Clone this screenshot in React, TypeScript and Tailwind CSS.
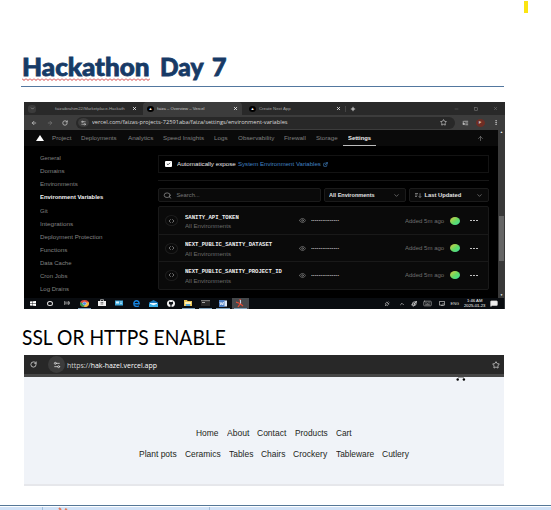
import { useLayoutEffect, useRef, type ReactNode } from "react";
import { Search, ChevronDown, Eye, Code, Star, ArrowUp, ArrowLeft, ArrowRight, RotateCw, ExternalLink, X, Plus, Check, ListMusic, Keyboard, MessageSquare, Settings2, MoreVertical, ChevronUp, Minus, Square, Plug, PenTool } from "lucide-react";

/* Single line label stretched to the width of its box. */
function Fit({ className, children }: { className: string; children: ReactNode }) {
  const box = useRef<HTMLSpanElement>(null);
  const text = useRef<HTMLSpanElement>(null);
  useLayoutEffect(() => {
    if (!box.current || !text.current) return;
    text.current.style.transform = `scaleX(${box.current.getBoundingClientRect().width / text.current.offsetWidth})`;
  }, []);
  return (
    <span ref={box} className={`block shrink-0 whitespace-nowrap ${className}`}>
      <span ref={text} className="inline-block origin-left">{children}</span>
    </span>
  );
}

const nav = [
  ["Project", "w-[19px] mr-[10.5px]"],
  ["Deployments", "w-[36px] mr-[10.5px]"],
  ["Analytics", "w-[25px] mr-[10px]"],
  ["Speed Insights", "w-[41px] mr-[10.5px]"],
  ["Logs", "w-[13.5px] mr-[10px]"],
  ["Observability", "w-[36px] mr-[10.5px]"],
  ["Firewall", "w-[21.5px] mr-[10px]"],
  ["Storage", "w-[22px] mr-[8px]"],
];

const side = [
  ["General", "w-[21px]"],
  ["Domains", "w-[24.5px]"],
  ["Environments", "w-[37.5px]"],
  ["Environment Variables", "w-[63px] font-bold text-[#f2f2f2]"],
  ["Git", "w-[7.5px]"],
  ["Integrations", "w-[33px]"],
  ["Deployment Protection", "w-[63px]"],
  ["Functions", "w-[27px]"],
  ["Data Cache", "w-[32px]"],
  ["Cron Jobs", "w-[28px]"],
  ["Log Drains", "w-[29px]"],
];

const variables = [
  ["SANITY_API_TOKEN", "w-[54px]"],
  ["NEXT_PUBLIC_SANITY_DATASET", "w-[87px]"],
  ["NEXT_PUBLIC_SANITY_PROJECT_ID", "w-[97px]"],
];

function TaskCell({ open, active, children }: { open?: boolean; active?: boolean; children: ReactNode }) {
  return (
    <div className={`flex h-full w-[17.3px] shrink-0 items-center justify-center px-[2px] ${active ? "bg-[#45484b]" : ""}`}>
      <div className={`flex h-full w-full items-center justify-center border-b ${open ? "border-[#7d9fb8]" : "border-transparent"}`}>{children}</div>
    </div>
  );
}

function Taskbar() {
  return (
    <div className="flex h-[11px] items-center bg-[#090c10] text-[#dedede]">
      <TaskCell>
        <svg className="h-[5px] w-[6px]" viewBox="0 0 6 5" fill="#fff"><path d="M0 .6 2.6.3v2H0zM3 .2 6 0v2.3H3zM0 2.7h2.6v2L0 4.4zM3 2.7h3V5l-3-.2z" /></svg>
      </TaskCell>
      <TaskCell><span className="h-[5px] w-[5.5px] rounded-[50%] border border-[#ddd]" /></TaskCell>
      <TaskCell>
        <svg className="h-[4px] w-[6px]" viewBox="0 0 7 5" fill="none" stroke="#bbb" strokeWidth=".8"><path d="M.5 0v5M5.5 0v5M.5 1.5h5M.5 3.5h5M6.7 1v3" /></svg>
      </TaskCell>
      <TaskCell open>
        <svg className="h-[7px] w-[9px]" viewBox="0 0 9 7" preserveAspectRatio="none"><ellipse cx="4.5" cy="3.5" rx="4.5" ry="3.5" fill="#d9473a" /><path d="M.3 2.2A4.5 3.5 0 0 0 4 7l1.5-3z" fill="#2f9e50" /><path d="M8.7 2.3A4.5 3.5 0 0 1 4 7l2-4.6z" fill="#eebb3b" /><ellipse cx="4.5" cy="3.5" rx="1.9" ry="1.5" fill="#4384e8" stroke="#eee" strokeWidth=".5" /></svg>
      </TaskCell>
      <TaskCell>
        <svg className="h-[8px] w-[8px]" viewBox="0 0 8 8"><path d="M2.5 2V.7h3V2" fill="none" stroke="#ddd" strokeWidth=".7" /><path d="M0 2h8v5H0z" fill="#eee" /><path d="M2.7 3h1v1h-1zM4.2 3h1v1h-1zM2.7 4.6h1v1h-1zM4.2 4.6h1v1h-1z" fill="#555" /></svg>
      </TaskCell>
      <TaskCell>
        <svg className="h-[6px] w-[8px]" viewBox="0 0 8 6"><path d="M0 .5h8v5H0z" fill="#3fa8dc" /><path d="M1 1.5h3v2H1z" fill="#d8f2ff" /><path d="M5 2h2M5 3.5h2" stroke="#d8f2ff" strokeWidth=".6" /></svg>
      </TaskCell>
      <TaskCell>
        <svg className="h-[7px] w-[7px]" viewBox="0 0 7 7" fill="none" stroke="#1682dc" strokeWidth="1.4"><path d="M1.6 3.7h4.6C6 1.2 4.6.7 3.6.7 2 .7.8 2 .8 3.7.8 6.5 4 6.9 6 5.8" /></svg>
      </TaskCell>
      <TaskCell>
        <svg className="h-[7px] w-[9px]" viewBox="0 0 9 7"><path d="M0 2.5 4.5 0 9 2.5V7H0z" fill="#1876b8" /><path d="M1 3h7v1.2L4.5 6 1 4.2z" fill="#e8f6ff" /><path d="M0 3.5 4.5 5.2 9 3.5V7H0z" fill="#38b0e8" /></svg>
      </TaskCell>
      <TaskCell>
        <svg className="h-[7px] w-[8px]" viewBox="0 0 8 7"><ellipse cx="4" cy="3.5" rx="4" ry="3.5" fill="#f4f4f4" /><path d="M2.2 1.5 3.2 2h1.6l1-.5.3 1.5c0 1.2-.7 1.6-1.5 1.7V7H3.400V4.7C2.5 4.6 1.9 4.2 1.9 3z" fill="#11151a" /></svg>
      </TaskCell>
      <TaskCell open>
        <svg className="h-[6px] w-[8px]" viewBox="0 0 8 6"><path d="M0 0h3l.6 1H8v5H0z" fill="#e9c75c" /><path d="M1 2h6v2H1z" fill="#fff1b8" /><path d="M2 4h4v2H2z" fill="#58a9d6" /></svg>
      </TaskCell>
      <TaskCell open>
        <svg className="h-[6px] w-[9px]" viewBox="0 0 9 6"><path d="M0 0h9v6H0z" fill="#292929" /><path d="M0 0h9v1.2H0z" fill="#777" /><path d="M1 2.5h3" stroke="#ddd" strokeWidth=".7" /></svg>
      </TaskCell>
      <TaskCell open>
        <svg className="h-[7px] w-[8px]" viewBox="0 0 8 7"><path d="M3 .5h5v6H3z" fill="#dce7f6" /><path d="M0 0h5.5v7H0z" fill="#4d7fc4" /><path d="m1 2 .8 3 1-2.5 1 2.5.8-3" fill="none" stroke="#fff" strokeWidth=".7" /></svg>
      </TaskCell>
      <TaskCell open active>
        <svg className="h-[8px] w-[8px]" viewBox="0 0 8 8"><path d="m4 0 .7 4L2 8M0 3l4 1.5L7 7" fill="none" stroke="#df4a35" strokeWidth="1.3" /><path d="M4.5 1v3.5" stroke="#bfd3e2" strokeWidth="1" /></svg>
      </TaskCell>
      <div className="ml-auto flex h-full items-center">
        <Plug className="mr-[8.5px] h-[6px] w-[6px] rotate-45 text-[#aaa]" strokeWidth={3} />
        <ChevronUp className="mr-[6.5px] h-[6px] w-[6px]" strokeWidth={2.5} />
        <PenTool className="mr-[6px] h-[6px] w-[6px] rotate-90" strokeWidth={3} />
        <Keyboard className="mr-[6.5px] h-[7px] w-[9px] text-[#aaa]" strokeWidth={2} preserveAspectRatio="none" />
        <svg className="mr-[6px] h-[5px] w-[6px]" viewBox="0 0 6 5" fill="none" stroke="#bbb" strokeWidth=".8"><path d="M.4.4h5.2v3.7H.4zM2 4.6h2.5M3.5 2.8h1.2" /></svg>
        <Fit className="mr-[4.5px] w-[9px] text-[4px] leading-[6px]">ENG</Fit>
        <div className="mr-[5px] flex flex-col items-center text-[4.2px] leading-[4.8px] text-white">
          <Fit className="w-[15px]">1:46 AM</Fit>
          <Fit className="w-[21px]">2025-01-23</Fit>
        </div>
        <MessageSquare className="mr-[6px] h-[7px] w-[8px]" fill="#eee" preserveAspectRatio="none" />
        <span className="h-full w-px bg-[#33363a]" />
      </div>
    </div>
  );
}

function ChromeTop() {
  return (
    <>
      <div className="flex h-[13px] items-center bg-[#292929] pl-[4px] text-[4.3px] leading-[6px] text-[#a4a4a4]">
        <span className="mr-[19px] flex h-[8px] w-[8px] items-center justify-center rounded-[3px] bg-[#3b3b3b]"><ChevronDown className="h-[5px] w-[5px]" strokeWidth={3} /></span>
        <Fit className="w-[70px]">faizaibrahim22/Marketplace-Hackath</Fit>
        <X className="ml-[7px] h-[5px] w-[5px] text-white" strokeWidth={3.5} />
        <div className="ml-[6px] flex h-[13px] w-[99px] items-center rounded-t-[4px] bg-[#3c3c3c] pl-[4px]">
          <span className="mr-[3px] flex h-[6px] w-[7px] items-center justify-center rounded-[50%] bg-black text-[4px] leading-none text-white">▲</span>
          <Fit className="w-[47px] text-[#c8c8c8]">faiza – Overview – Vercel</Fit>
          <X className="ml-[29px] h-[5px] w-[5px] text-white" strokeWidth={3.5} />
        </div>
        <span className="mr-[3px] ml-[7px] flex h-[6px] w-[7px] items-center justify-center rounded-[50%] bg-black text-[4px] leading-none text-white">▲</span>
        <Fit className="w-[32px]">Create Next App</Fit>
        <X className="ml-[45px] h-[5px] w-[5px] text-white" strokeWidth={3.5} />
        <span className="mx-[4px] h-[6px] w-px bg-[#444]" />
        <Plus className="h-[6px] w-[6px] text-white" strokeWidth={3} />
        <Minus className="ml-auto h-[6px] w-[5px] text-[#777]" />
        <Square className="mx-[15px] h-[4px] w-[4px] text-[#888]" strokeWidth={3} />
        <X className="mr-[7px] h-[5px] w-[5px] text-[#888]" />
      </div>
      <div className="flex h-[15px] items-center bg-[#3c3c3c] pl-[6.5px] text-[#c9c9c9]">
        <ArrowLeft className="h-[6px] w-[6px]" strokeWidth={3} />
        <ArrowRight className="ml-[10px] h-[6px] w-[6px] text-[#777]" strokeWidth={3} />
        <RotateCw className="ml-[9px] h-[6px] w-[6px]" strokeWidth={3} />
        <div className="ml-[8px] flex h-[12px] w-[379px] items-center rounded-full bg-[#282828] pl-[2px]">
          <span className="flex h-[9px] w-[11px] items-center justify-center rounded-[50%] bg-[#3c3c3c]"><Settings2 className="h-[6px] w-[7px]" strokeWidth={2.5} /></span>
          <Fit className="ml-[3px] w-[196px] font-['Open_Sans'] text-[6px] leading-[9px] text-[#d8d8d8]">vercel.com/faizas-projects-72591aba/faiza/settings/environment-variables</Fit>
          <Star className="ml-auto mr-[8px] h-[7px] w-[7px]" strokeWidth={2.5} />
        </div>
        <ListMusic className="ml-[7px] h-[6px] w-[7px] -scale-x-100" strokeWidth={3} />
        <span className="ml-[7px] flex h-[8px] w-[9px] items-center justify-center rounded-[50%] bg-[#6e2e25] text-[4px] leading-none text-white">F</span>
        <MoreVertical className="ml-[8px] h-[7px] w-[6px]" strokeWidth={3} />
      </div>
    </>
  );
}

function Dashboard() {
  return (
    <div className="flex h-[168px]">
      <div className="flex w-[474px] flex-col">
        <div className="flex h-[16px] shrink-0 items-center bg-[#0a0a0a] pl-[11.5px] text-[5.6px] leading-[8px] text-[#808080]">
          <svg className="mr-[8px] h-[6px] w-[8px]" viewBox="0 0 8 6"><path d="M4 0 8 6H0z" fill="#fff" /></svg>
          {nav.map(([label, size]) => <Fit key={label} className={size}>{label}</Fit>)}
          <div className="-ml-[3px] flex h-full w-[33px] items-center justify-center border-b border-[#bdbdbd] text-[#eee]"><Fit className="w-[23px] font-bold">Settings</Fit></div>
          <ArrowUp className="mr-[14px] ml-auto h-[7px] w-[7px]" strokeWidth={2.2} />
        </div>
        <div className="flex min-h-0 flex-1">
          <div className="flex w-[133.5px] shrink-0 flex-col pt-[6px] pl-[15.5px] text-[5.6px] text-[#828282]">
            {side.map(([label, size]) => <Fit key={label} className={`h-[13.15px] leading-[13px] ${size}`}>{label}</Fit>)}
          </div>
          <div className="flex w-[331px] flex-col pt-[5px]">
            <div className="mt-[4px] flex h-[18px] shrink-0 items-center border border-[#131313] pl-[6px] text-[5.8px] leading-[9px] text-[#e8e8e8]">
              <span className="mr-[5px] flex h-[6px] w-[7px] items-center justify-center rounded-[1px] bg-white text-black"><Check className="h-[4px] w-[5px]" strokeWidth={4} /></span>
              <Fit className="mr-[2px] w-[59px] font-medium">Automatically expose</Fit>
              <Fit className="mr-[2px] w-[83px] text-[#4182c2]">System Environment Variables</Fit>
              <ExternalLink className="h-[5px] w-[5px] text-[#4182c2]" strokeWidth={3} />
            </div>
            <div className="mt-[7px] h-px shrink-0 bg-[#171717]" />
            <div className="mt-[7px] flex h-[14px] shrink-0 gap-[3px] text-[5.8px] leading-[9px] text-[#e3e3e3]">
              <div className="flex w-[163.5px] items-center rounded-[2px] border border-[#1b1b1b] bg-[#0a0a0a] pl-[4px] text-[#777]"><Search className="mr-[5px] h-[7px] w-[9px] text-[#a0a0a0]" preserveAspectRatio="none" /><Fit className="w-[23px]">Search...</Fit></div>
              <div className="flex w-[81.5px] items-center rounded-[2px] border border-[#1b1b1b] bg-[#0a0a0a] pr-[5px] pl-[4px]"><Fit className="w-[46px] font-bold">All Environments</Fit><ChevronDown className="ml-auto h-[7px] w-[7px] text-[#999]" /></div>
              <div className="flex w-[80px] items-center rounded-[2px] border border-[#1b1b1b] bg-[#0a0a0a] pr-[5px] pl-[5px]">
                <svg className="mr-[3px] h-[5px] w-[7px]" viewBox="0 0 7 5" fill="none" stroke="#999" strokeWidth=".7"><path d="M0 .5h3M0 2h2.5M0 3.5h2M5 .2v4.3M3.7 3.2 5 4.5l1.3-1.3" /></svg>
                <Fit className="w-[37px] font-bold">Last Updated</Fit><ChevronDown className="ml-auto h-[7px] w-[7px] text-[#999]" />
              </div>
            </div>
            <div className="mt-[4px] rounded-[2px] border border-[#191919] bg-[#0a0a0a]">
              {variables.map(([name, size], i) => (
                <div key={name} className={`flex h-[27.2px] items-center pr-[10px] pl-[6px] ${i ? "border-t border-[#191919]" : ""}`}>
                  <span className="mr-[7px] flex h-[11px] w-[13px] items-center justify-center rounded-[50%] border border-[#1d1d1d]"><Code className="h-[6px] w-[7px] text-[#bbb]" strokeWidth={2.2} /></span>
                  <div className="flex w-[117.5px] flex-col pt-[3px]">
                    <Fit className={`h-[8.5px] font-['Liberation_Mono'] text-[5.4px] leading-[9.5px] font-bold text-[#f1f1f1] ${size}`}>{name}</Fit>
                    <Fit className="h-[8.5px] w-[46px] text-[5.6px] leading-[8.5px] text-[#6b6b6b]">All Environments</Fit>
                  </div>
                  <Eye className="-ml-[3px] h-[7px] w-[7px] text-[#858585]" strokeWidth={2.2} />
                  <Fit className="ml-[4.5px] w-[28px] text-[4px] leading-[7px] text-[#aaa]">•••••••••••••••</Fit>
                  <Fit className="ml-auto w-[39.5px] text-[5.8px] leading-[8px] text-[#707070]">Added 5m ago</Fit>
                  <span className="ml-[6px] h-[8px] w-[10px] rounded-[50%] bg-linear-to-br from-[#d0c63c] via-[#67da62] to-[#35dd9c]" />
                  <span className="ml-[10px] flex gap-[1.5px]">{[0, 1, 2].map((n) => <span key={n} className="h-[1.5px] w-[1.5px] bg-[#c0c0c0]" />)}</span>
                </div>
              ))}
            </div>
          </div>
        </div>
      </div>
      <div className="flex w-[7px] flex-col items-center bg-[#393939] text-[3px] leading-[5px] text-white">
        <span>▲</span>
        <span className="mt-[81px] h-[45px] w-[5px] bg-[#666]" />
        <span className="mt-auto">▼</span>
      </div>
    </div>
  );
}

export default function App() {
  return (
    <div className="flex h-[510px] w-[551px] flex-col overflow-hidden bg-white font-['Liberation_Sans',sans-serif]">
      <header className="ml-[21px] flex h-[87px] w-[483px] shrink-0 items-end justify-between border-b border-[#52779f]">
        <h1 className="flex h-[36px] font-['Lato',sans-serif] text-[25px] leading-[32px] font-black text-[#173a66] [-webkit-text-stroke:0.8px_#173a66]">
          <span className="mr-[10px] ml-px flex flex-col">
            <Fit className="h-[28px] w-[127px]">Hackathon</Fit>
            <svg className="h-[3px] w-[128px]" viewBox="0 0 128 3"><defs><pattern id="wave" width="4" height="3" patternUnits="userSpaceOnUse"><path d="M0 .5 2 2.5 4 .5" fill="none" stroke="#d33a3a" strokeWidth="1" /></pattern></defs><rect width="128" height="3" fill="url(#wave)" stroke="none" /></svg>
          </span>
          <Fit className="mr-[9px] w-[43px]">Day</Fit>
          <Fit className="w-[15px]">7</Fit>
        </h1>
        <span className="-mr-[24px] mb-[73px] h-[12px] w-[4px] bg-[#fbe412]" />
      </header>
      <section className="mt-[15px] ml-[24px] flex h-[207px] w-[481px] shrink-0 flex-col overflow-hidden bg-black">
        <ChromeTop />
        <Dashboard />
        <Taskbar />
      </section>
      <h2 className="ml-[22px] h-[46px] shrink-0 font-['Lato',sans-serif] text-[21px] leading-[55px] text-black"><Fit className="w-[204px]">SSL OR HTTPS ENABLE</Fit></h2>
      <section className="ml-[24px] flex h-[131px] w-[480px] shrink-0 flex-col border-b-2 border-[#e6e7eb] bg-[#f0f3f8]">
        <div className="flex h-[22px] shrink-0 items-center border-b-[3px] border-[#464646] bg-[#282828] pl-[6px] text-[#d4d4d4]">
          <RotateCw className="h-[7px] w-[7px]" strokeWidth={2.8} />
          <span className="ml-[11px] flex h-[17px] w-[17px] items-center justify-center rounded-full bg-[#3c3c3c]"><Settings2 className="h-[8px] w-[8px]" strokeWidth={2.5} /></span>
          <Fit className="ml-[2px] w-[90px] font-['Open_Sans'] text-[7.8px] leading-[12px]">https://<span className="text-white">hak-hazel.vercel.app</span></Fit>
          <Star className="mr-[4px] ml-auto h-[8px] w-[8px]" strokeWidth={2.4} />
        </div>
        <svg className="ml-[432px] h-[4px] w-[10px] shrink-0" viewBox="0 0 10 4"><path d="M2 .5h6" stroke="#777" strokeWidth=".7" /><circle cx="1.7" cy="2.5" r="1.2" /><circle cx="7.9" cy="2.5" r="1.2" /></svg>
        <nav className="mt-[46px] flex flex-col text-[8.8px] leading-[12px] text-[#1c1e20]">
          <div className="ml-[172px] flex">
            <Fit className="mr-[8.5px] w-[22px]">Home</Fit><Fit className="mr-[8px] w-[22.5px]">About</Fit><Fit className="mr-[8.5px] w-[29px]">Contact</Fit><Fit className="mr-[8.5px] w-[33px]">Products</Fit><Fit className="w-[16px]">Cart</Fit>
          </div>
          <div className="mt-[9px] ml-[114.5px] flex">
            <Fit className="mr-[8.5px] w-[37.5px]">Plant pots</Fit><Fit className="mr-[8.5px] w-[35.5px]">Ceramics</Fit><Fit className="mr-[8px] w-[24px]">Tables</Fit><Fit className="mr-[8.5px] w-[24px]">Chairs</Fit><Fit className="mr-[8.5px] w-[34px]">Crockery</Fit><Fit className="mr-[8px] w-[38px]">Tableware</Fit><Fit className="w-[27px]">Cutlery</Fit>
          </div>
        </nav>
      </section>
      <footer className="mt-auto flex h-[5px] shrink-0 border-t border-[#557797] pt-px">
        <div className="flex w-full bg-[#d1e2f7]">
          <span className="w-[43px] border-r border-[#a3bfdc]" />
          <svg className="ml-[15px] h-[3px] w-[10px]" viewBox="0 0 10 3"><path d="m1 1 2 2M7 2l2 1" stroke="#e47b5d" strokeWidth="2" /></svg>
          <span className="ml-[132px] w-[10px] border-r border-[#a3bfdc]" />
        </div>
      </footer>
    </div>
  );
}
